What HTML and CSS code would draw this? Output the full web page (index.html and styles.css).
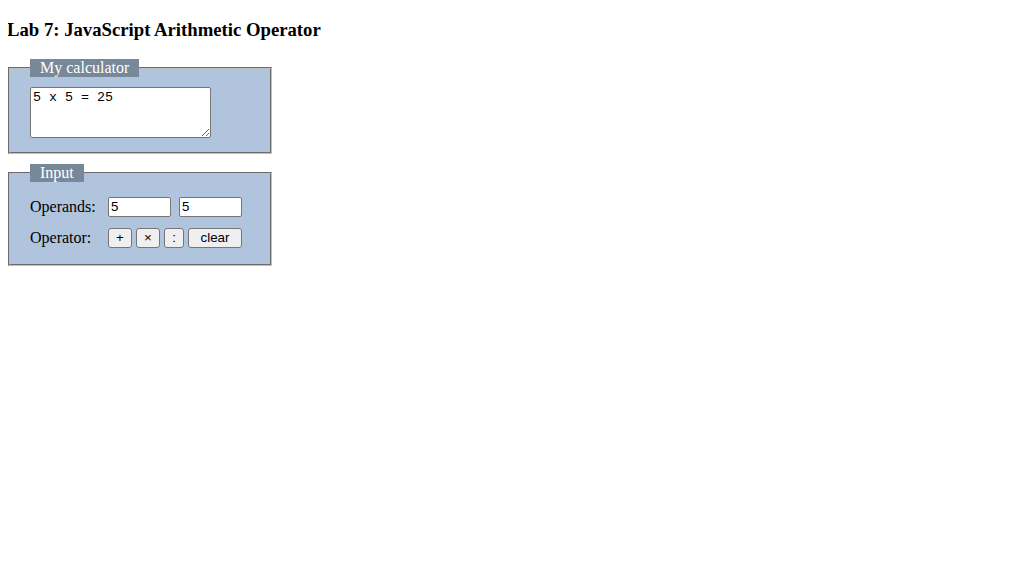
FILE: index.html
```html
<!DOCTYPE html>
<html>
<head>
<meta charset="utf-8">
<title>Lab 7</title>
<link rel="stylesheet" href="styles.css">
</head>
<body>
<h3 class="title">Lab 7: JavaScript Arithmetic Operator</h3>
<fieldset class="box calc">
  <legend class="legend">My calculator</legend>
  <textarea class="output" cols="20" rows="3">5 x 5 = 25</textarea>
</fieldset>
<fieldset class="box inputs">
  <legend class="legend">Input</legend>
  <div class="row first">
    <span class="label">Operands:</span>
    <div class="controls wide">
      <input class="num" type="text" value="5">
      <input class="num" type="text" value="5">
    </div>
  </div>
  <div class="row">
    <span class="label">Operator:</span>
    <div class="controls">
      <button class="btn op">+</button>
      <button class="btn op">×</button>
      <button class="btn colon">:</button>
      <button class="btn clear">clear</button>
    </div>
  </div>
</fieldset>
</body>
</html>
```
FILE: styles.css
```css
body {
  margin: 8px;
  font-family: "Liberation Serif", "Times New Roman", serif;
  font-size: 16px;
  color: #000;
  background: #fff;
}
.title {
  font-size: 18.72px;
  font-weight: bold;
  margin: 10.72px 0 18px -1px;
}
.box {
  box-sizing: border-box;
  width: 264px;
  margin: 0 0 10px 0;
  padding: 2px 20px 14px 20px;
  background: #b0c4de;
  border: 2px groove #c0c0c0;
}
.box.inputs {
  padding-bottom: 16px;
}
.legend {
  background: #778899;
  color: #fff;
  padding: 0 10px;
  line-height: 18px;
}
.output {
  display: block;
  margin-top: 8px;
  width: 181px;
  height: 51px;
  box-sizing: border-box;
  font-family: "Liberation Mono", "Courier New", monospace;
  font-size: 13.33px;
  padding: 2px;
  border: 1px solid #767676;
  border-radius: 2px;
  resize: both;
}
.row {
  display: flex;
  align-items: center;
  height: 20px;
  margin-top: 11px;
}
.row.first {
  margin-top: 13px;
}
.label {
  width: 78px;
  white-space: nowrap;
}
.controls {
  display: flex;
  gap: 4px;
}
.controls.wide {
  gap: 8px;
}
.num {
  box-sizing: border-box;
  width: 63px;
  height: 20px;
  margin: 0;
  padding: 1px 2px;
  font-family: "Liberation Sans", Arial, sans-serif;
  font-size: 13.33px;
  border: 1px solid #767676;
  border-radius: 2px;
  background: #fff;
}
.btn {
  box-sizing: border-box;
  height: 20px;
  margin: 0;
  padding: 1px 6px;
  font-family: "Liberation Sans", Arial, sans-serif;
  font-size: 13.33px;
  background: #efefef;
  border: 1px solid #767676;
  border-radius: 3px;
  color: #000;
}
.op { width: 24px; padding: 0; }
.colon { width: 20px; padding: 0; }
.clear { width: 54px; }
```
